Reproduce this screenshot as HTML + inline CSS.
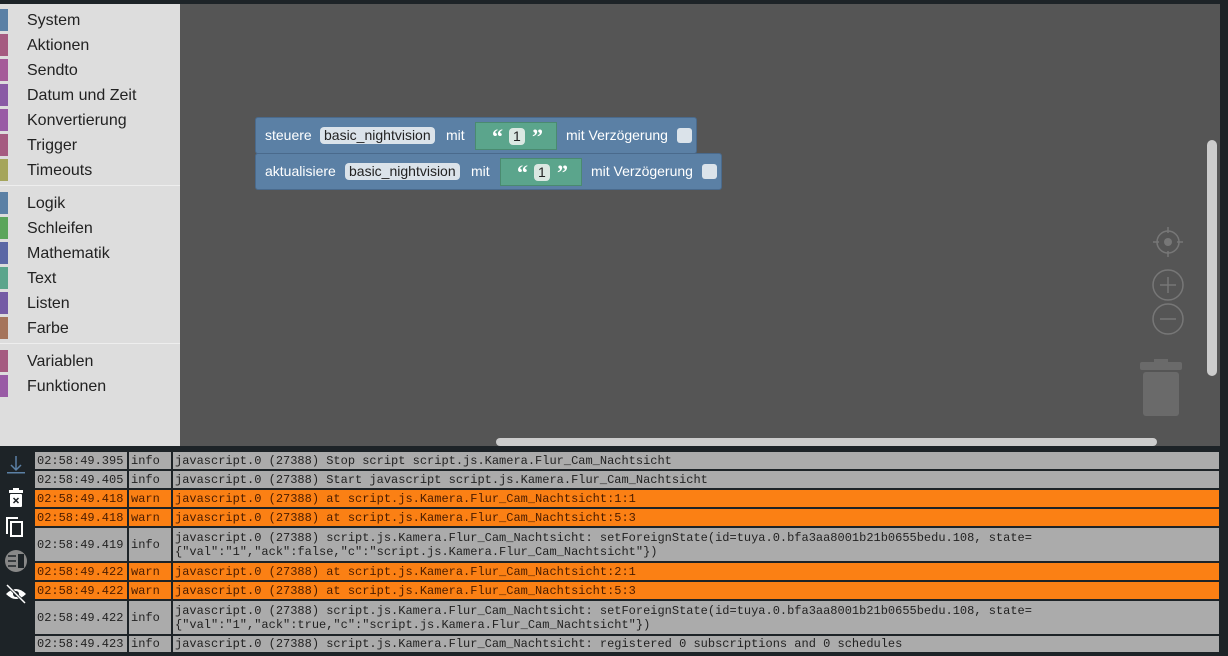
<!DOCTYPE html><html><head><style>
*{margin:0;padding:0;box-sizing:border-box}
body{width:1228px;height:656px;background:#1d2327;position:relative;overflow:hidden;font-family:"Liberation Sans",sans-serif}
#side{position:absolute;left:0;top:4px;width:180px;height:442px;background:#dddddd}
.it{position:absolute;left:0;height:22px;width:180px;font-size:16px;color:#222;line-height:22px}
.it b{position:absolute;left:0;top:0;width:8px;height:22px}
.it span{position:absolute;left:27px;top:1px}
.sep{position:absolute;left:0;width:180px;height:1px;background:#eee}
#ws{position:absolute;left:180px;top:4px;width:1040px;height:442px;background:#555}
.blk{position:absolute;background:#5b80a5;border:1px solid #4a6a8c;border-radius:3px;color:#fff;font-size:14px;line-height:34px;white-space:nowrap}
.blk .t{position:absolute;top:0}
.fld{position:absolute;top:9px;height:17px;background:#dbe3ea;color:#222;border-radius:4px;line-height:17px;padding:0 4px;font-size:14px}
.grn{position:absolute;top:4px;height:28px;background:#5ba58c;border:1px solid #4a8a70}
.q{position:absolute;top:-3px;font-weight:bold;font-size:22px;font-family:"Liberation Serif",serif}
.chk{position:absolute;top:10px;width:15px;height:15px;background:#dbe3ea;border-radius:3px}
#log{position:absolute;left:35px;top:450px;width:1184px}
.r{position:absolute;left:0;width:1184px;background:#ababab;font-family:"Liberation Mono",monospace;font-size:12px;color:#222}
.r.w{background:#fb8014;color:#4a1c00}
.r div{position:absolute;top:0;bottom:0;border-right:2px solid #1d2327;display:flex;align-items:center;padding-left:2px;line-height:14px;white-space:pre}
</style></head><body>
<div id="side">
<div class="it" style="top:5px"><b style="background:#5b80a5"></b><span>System</span></div>
<div class="it" style="top:30px"><b style="background:#a55b80"></b><span>Aktionen</span></div>
<div class="it" style="top:55px"><b style="background:#a55b99"></b><span>Sendto</span></div>
<div class="it" style="top:80px"><b style="background:#8a5ba5"></b><span>Datum und Zeit</span></div>
<div class="it" style="top:105px"><b style="background:#995ba5"></b><span>Konvertierung</span></div>
<div class="it" style="top:130px"><b style="background:#a55b80"></b><span>Trigger</span></div>
<div class="it" style="top:155px"><b style="background:#a5a55b"></b><span>Timeouts</span></div>
<div class="sep" style="top:181px"></div>
<div class="it" style="top:188px"><b style="background:#5b80a5"></b><span>Logik</span></div>
<div class="it" style="top:213px"><b style="background:#5ba55b"></b><span>Schleifen</span></div>
<div class="it" style="top:238px"><b style="background:#5b67a5"></b><span>Mathematik</span></div>
<div class="it" style="top:263px"><b style="background:#5ba58c"></b><span>Text</span></div>
<div class="it" style="top:288px"><b style="background:#745ba5"></b><span>Listen</span></div>
<div class="it" style="top:313px"><b style="background:#a5745b"></b><span>Farbe</span></div>
<div class="sep" style="top:339px"></div>
<div class="it" style="top:346px"><b style="background:#a55b80"></b><span>Variablen</span></div>
<div class="it" style="top:371px"><b style="background:#995ba5"></b><span>Funktionen</span></div>
</div>
<div id="ws">
<div class="blk" style="left:75px;top:113px;width:442px;height:37px">
<span class="t" style="left:9px">steuere</span><span class="fld" style="left:64px">basic_nightvision</span><span class="t" style="left:190px">mit</span>
<div class="grn" style="left:219px;width:82px"><span class="q" style="left:16px">“</span><span class="fld" style="left:33px;top:5px;background:#dbe8e2">1</span><span class="q" style="left:56px">”</span></div>
<span class="t" style="left:310px">mit Verzögerung</span><div class="chk" style="left:421px"></div></div>
<div class="blk" style="left:75px;top:149px;width:467px;height:37px">
<span class="t" style="left:9px">aktualisiere</span><span class="fld" style="left:89px">basic_nightvision</span><span class="t" style="left:215px">mit</span>
<div class="grn" style="left:244px;width:82px"><span class="q" style="left:16px">“</span><span class="fld" style="left:33px;top:5px;background:#dbe8e2">1</span><span class="q" style="left:56px">”</span></div>
<span class="t" style="left:335px">mit Verzögerung</span><div class="chk" style="left:446px"></div></div>
<svg style="position:absolute;left:950px;top:220px" width="60" height="200" viewBox="0 0 60 200">
<g stroke="#777" stroke-width="1.5" fill="none"><circle cx="38" cy="18" r="11"/><path d="M38 3v6M38 27v6M23 18h6M47 18h6"/>
<circle cx="38" cy="61" r="15"/><path d="M30 61h16M38 53v16"/><circle cx="38" cy="95" r="15"/><path d="M30 95h16"/></g>
<circle cx="38" cy="18" r="4" fill="#777"/>
<rect x="10" y="138" width="42" height="8" rx="2" fill="#6a6a6a"/><rect x="24" y="135" width="14" height="5" fill="#6a6a6a"/><rect x="13" y="148" width="36" height="44" rx="3" fill="#6a6a6a"/>
</svg>
<div style="position:absolute;left:1027px;top:136px;width:10px;height:236px;background:#ccc;border-radius:5px"></div>
<div style="position:absolute;left:316px;top:434px;width:661px;height:8px;background:#ccc;border-radius:4px"></div>
</div>
<svg style="position:absolute;left:4px;top:454px" width="26" height="200" viewBox="0 0 26 200">
<path d="M12 2v14M7 11l5 5 5-5" stroke="#5b80a5" stroke-width="1.5" fill="none"/><rect x="3" y="18" width="18" height="1.5" fill="#5b80a5"/>
<rect x="5" y="36" width="14" height="3" fill="#fff"/><rect x="9" y="34" width="6" height="2" fill="#fff"/><rect x="6" y="40" width="12" height="13" rx="1" fill="#fff"/><path d="M9.5 44l5 5M14.5 44l-5 5" stroke="#1d2327" stroke-width="1.5"/>
<path d="M3 80V64h11" stroke="#fff" stroke-width="2" fill="none"/><rect x="7" y="68" width="11" height="14" stroke="#fff" stroke-width="2" fill="none"/>
<circle cx="12" cy="107" r="11" fill="#888"/><path d="M4 102h8M4 107h8M4 112h8" stroke="#1d2327" stroke-width="1.5"/><rect x="14" y="100" width="6" height="14" fill="#1d2327"/>
<path d="M2 140q10-10 20 0q-10 10-20 0z" fill="#fff"/><circle cx="12" cy="140" r="3" fill="#1d2327"/><path d="M3 131l18 18" stroke="#1d2327" stroke-width="3"/><path d="M3 131l18 18" stroke="#fff" stroke-width="1.5"/>
</svg>
<div id="log">
<div class="r" style="top:2px;height:17px"><div style="left:0;width:94px">02:58:49.395</div><div style="left:94px;width:44px">info</div><div style="left:138px;border:0">javascript.0 (27388) Stop script script.js.Kamera.Flur_Cam_Nachtsicht</div></div>
<div class="r" style="top:21px;height:17px"><div style="left:0;width:94px">02:58:49.405</div><div style="left:94px;width:44px">info</div><div style="left:138px;border:0">javascript.0 (27388) Start javascript script.js.Kamera.Flur_Cam_Nachtsicht</div></div>
<div class="r w" style="top:40px;height:17px"><div style="left:0;width:94px">02:58:49.418</div><div style="left:94px;width:44px">warn</div><div style="left:138px;border:0">javascript.0 (27388) at script.js.Kamera.Flur_Cam_Nachtsicht:1:1</div></div>
<div class="r w" style="top:59px;height:17px"><div style="left:0;width:94px">02:58:49.418</div><div style="left:94px;width:44px">warn</div><div style="left:138px;border:0">javascript.0 (27388) at script.js.Kamera.Flur_Cam_Nachtsicht:5:3</div></div>
<div class="r" style="top:78px;height:33px"><div style="left:0;width:94px">02:58:49.419</div><div style="left:94px;width:44px">info</div><div style="left:138px;border:0">javascript.0 (27388) script.js.Kamera.Flur_Cam_Nachtsicht: setForeignState(id=tuya.0.bfa3aa8001b21b0655bedu.108, state=
{"val":"1","ack":false,"c":"script.js.Kamera.Flur_Cam_Nachtsicht"})</div></div>
<div class="r w" style="top:113px;height:17px"><div style="left:0;width:94px">02:58:49.422</div><div style="left:94px;width:44px">warn</div><div style="left:138px;border:0">javascript.0 (27388) at script.js.Kamera.Flur_Cam_Nachtsicht:2:1</div></div>
<div class="r w" style="top:132px;height:17px"><div style="left:0;width:94px">02:58:49.422</div><div style="left:94px;width:44px">warn</div><div style="left:138px;border:0">javascript.0 (27388) at script.js.Kamera.Flur_Cam_Nachtsicht:5:3</div></div>
<div class="r" style="top:151px;height:33px"><div style="left:0;width:94px">02:58:49.422</div><div style="left:94px;width:44px">info</div><div style="left:138px;border:0">javascript.0 (27388) script.js.Kamera.Flur_Cam_Nachtsicht: setForeignState(id=tuya.0.bfa3aa8001b21b0655bedu.108, state=
{"val":"1","ack":true,"c":"script.js.Kamera.Flur_Cam_Nachtsicht"})</div></div>
<div class="r" style="top:186px;height:16px"><div style="left:0;width:94px">02:58:49.423</div><div style="left:94px;width:44px">info</div><div style="left:138px;border:0">javascript.0 (27388) script.js.Kamera.Flur_Cam_Nachtsicht: registered 0 subscriptions and 0 schedules</div></div>
</div>
</body></html>
